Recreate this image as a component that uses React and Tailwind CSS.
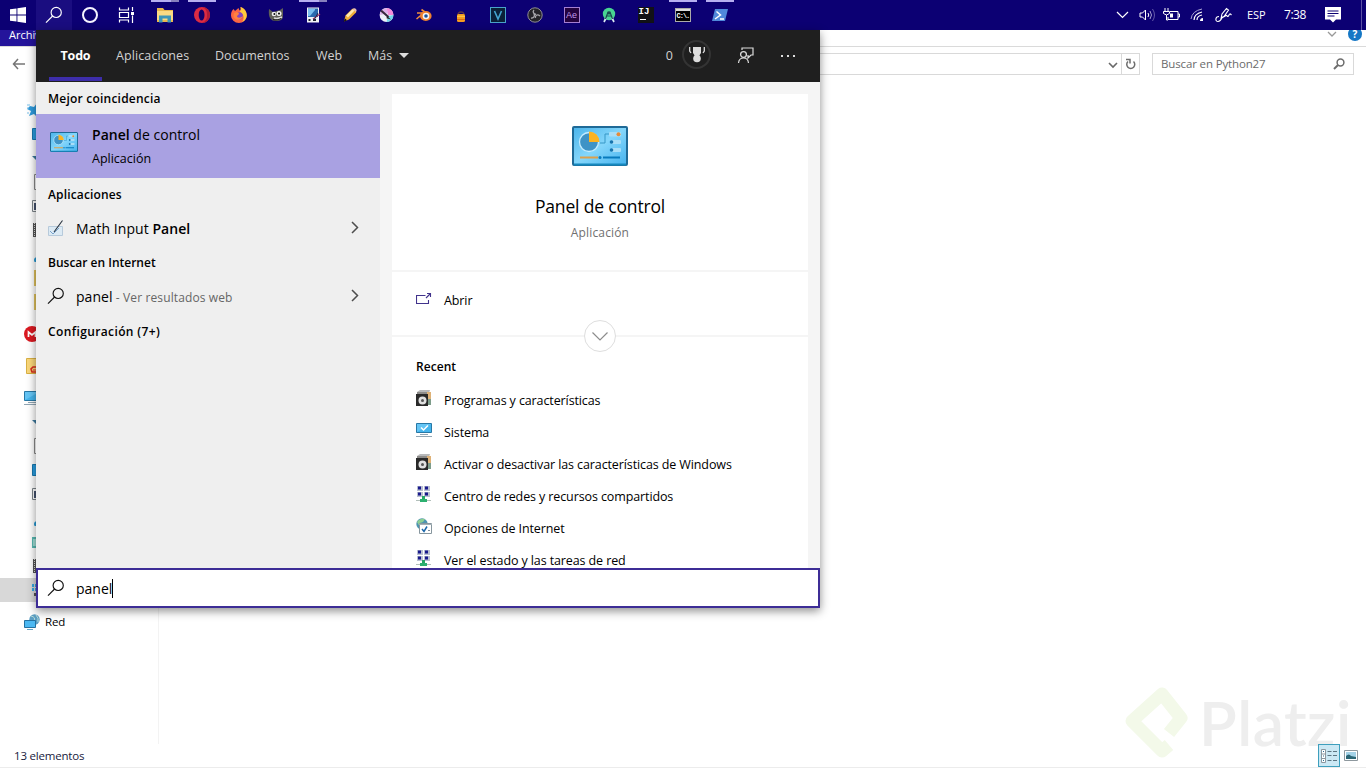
import React from "react";

const Svg = ({ w = 16, h = 16, box, className = "", children }) => (
  <svg width={w} height={h} viewBox={box || `0 0 ${w} ${h}`} fill="none" className={`shrink-0 ${className}`}>
    {children}
  </svg>
);

const Magnifier = ({ color = "#111", size = 18, className = "" }) => (
  <Svg w={size} h={size} box="0 0 18 18" className={className}>
    <circle cx="11.2" cy="6.4" r="5.1" stroke={color} strokeWidth="1.15" />
    <path d="M7.600 10 1 16.600" stroke={color} strokeWidth="1.15" />
  </Svg>
);

const ControlPanel = ({ w, h, id, className }) => (
  <Svg w={w} h={h} box="0 0 56 40" className={className}>
    <defs>
      <linearGradient id={id} x1="0" y1="0" x2="1" y2="1">
        <stop offset="0" stopColor="#4bb4ea" />
        <stop offset=".5" stopColor="#84d6fb" />
        <stop offset="1" stopColor="#45b2ee" />
      </linearGradient>
    </defs>
    <rect x="1" y="1" width="54" height="38" rx="1" fill={`url(#${id})`} stroke="#1f6a97" strokeWidth="2" />
    <path d="M2 38.500h52" stroke="#1688bd" strokeWidth="2" />
    <circle cx="17" cy="16" r="9.500" fill="#3f93c6" stroke="#c4ecff" strokeWidth="1.300" />
    <path d="M17 16V5.500A10.500 10.500 0 0 1 27.500 16Z" fill="#fbb322" />
    <path d="M28 17h5V8h4" stroke="#3797c6" />
    <rect x="37" y="6" width="12" height="4.500" rx="1" fill="#a9def7" />
    <circle cx="46.500" cy="8.300" r="2" fill="#e58b3a" />
    <rect x="40" y="14" width="9" height="4" rx="1" fill="#a9def7" />
    <circle cx="39.500" cy="16" r="1.800" fill="#1874ad" />
    <rect x="40" y="22" width="9" height="4" rx="1" fill="#a9def7" />
    <circle cx="39.500" cy="24" r="1.800" fill="#1874ad" />
    <path d="M8 31.500h18" stroke="#dda04c" strokeWidth="2" />
    <path d="M31 31.500h17" stroke="#087abd" strokeWidth="2" />
    <circle cx="28" cy="31.500" r="1.500" fill="#087abd" />
  </Svg>
);

/* ---------- taskbar ---------- */

const appIcons = {
  explorer: (
    <Svg>
      <path d="M0 1h6l1.500 2H16v12H0z" fill="#e9b84f" />
      <path d="M0 4h16v9H0z" fill="#fbdb84" />
      <path d="M2 15.500V8.500h12v7h-3.500v-4h-5v4z" fill="#3e97b8" />
    </Svg>
  ),
  opera: (
    <Svg>
      <circle cx="8" cy="8" r="8" fill="#dc2b43" />
      <path d="M8 0a8 8 0 0 1 0 16 8 8 0 0 0 5-8 8 8 0 0 0-5-8z" fill="#b01c37" />
      <ellipse cx="7.600" cy="8" rx="2.900" ry="5.500" fill="#12006b" />
    </Svg>
  ),
  firefox: (
    <Svg>
      <path d="M2.500 2l1.500 2L7.500 1l1 2.500c2-1 1-2.500 1-3.500 3 1 6.300 4 6.300 8.500a7.900 7.400 0 0 1-15.800 0c0-3 .5-4.500 2.500-6.500z" fill="#fb6543" />
      <path d="M9.500 0c4 1 6.600 5 6.200 9-.4 3-2 5-4.500 6 3-5 1-8-2.500-10.500 2-1 .8-3.500.8-4.500z" fill="#ffcc3c" />
      <circle cx="8.300" cy="8.800" r="3.600" fill="#8246c2" />
      <path d="M3 6c2-1 5-1 5 1L6 9c0 2 3 2.500 6 0-1 5-9 5-9.500 0z" fill="#ff8140" />
    </Svg>
  ),
  gimp: (
    <Svg>
      <path d="M1 2l4 3 7-2 3-2v8c0 4-3 5-7 5-5 0-8-3-7-12z" fill="#5f5f57" />
      <circle cx="6" cy="7" r="2.300" fill="#eee" />
      <circle cx="11" cy="6.500" r="2.500" fill="#f6f6f6" />
      <circle cx="6.400" cy="7" r="1" fill="#111" />
      <circle cx="11" cy="6.600" r="1.100" fill="#111" />
      <path d="M6 11c3 1 6 0 8-1" stroke="#ddd" strokeWidth="1.500" />
      <path d="M5 12.500c3 1 6 0 8-1" stroke="#222" />
    </Svg>
  ),
  rapid: (
    <Svg>
      <path d="M2 .5h12v15H2z" fill="#f2f3f8" />
      <path d="M3 1.500h10v8.500H3z" fill="#2b69ae" />
      <path d="M3 2h7v1L5 9H3z" fill="#7abff0" />
      <path d="M3.500 12h2v2h-2zM8 12h3v2H8z" fill="#20242c" />
      <path d="M8 12l7-5" stroke="#a43762" strokeWidth="1.300" />
      <path d="M9 13l4-7" stroke="#222b52" />
    </Svg>
  ),
  pencil: (
    <Svg>
      <path d="M2 14.500l1.500-6 6.500-6.500c2-1 5 1 4 3.500l-7 7z" fill="#efac37" />
      <path d="M4 8.500l6.500-6.300 2 1.300L6 10.500z" fill="#ffe9ae" />
      <path d="M10.500 2l1.500-.8c1.500-.3 3 1.300 2.500 2.700l-.8 1.200z" fill="#e5b9b1" />
      <path d="M1.500 15l1.500-3.500 2 1.700z" fill="#111" />
    </Svg>
  ),
  krita: (
    <Svg>
      <circle cx="7.500" cy="8" r="6.900" fill="#eef0f8" />
      <path d="M7.500 1a7 7 0 0 1 7 7H9z" fill="#f48cda" />
      <path d="M1 8a7 7 0 0 1 6.500-7L9 6z" fill="#ddb0e8" />
      <path d="M14.500 8a7 7 0 0 1-7 7L9 9z" fill="#75d6ea" />
      <path d="M2 3.500l7.500 6.500" stroke="#38283c" strokeWidth="2.200" />
      <path d="M8 9l4 3.500-4.500-1.300z" fill="#222" />
    </Svg>
  ),
  blender: (
    <Svg>
      <path d="M1 6h7M.5 12l6-5M5.500 2.500l6 4.500" stroke="#ef8e3b" strokeWidth="1.600" />
      <ellipse cx="9.800" cy="9" rx="5.800" ry="5" fill="#ef812e" />
      <circle cx="10" cy="9" r="3.300" fill="#f5f5f5" />
      <circle cx="10" cy="9" r="1.800" fill="#18539a" />
    </Svg>
  ),
  bag: (
    <Svg>
      <path d="M5 8c0-4 6-4 6 0" stroke="#593348" strokeWidth="1.300" />
      <rect x="4" y="7" width="8" height="8" rx="1.500" fill="#f59b20" />
      <path d="M4 9.300h8" stroke="#ffd04e" />
      <path d="M4 12.500h8" stroke="#d96c13" />
    </Svg>
  ),
  vegas: (
    <Svg>
      <rect x=".5" y=".5" width="15" height="15" fill="#0a2038" stroke="#4aa3ca" />
      <path d="M4.500 4l3.500 8 3.500-8" stroke="#43a3d1" strokeWidth="1.600" />
    </Svg>
  ),
  obs: (
    <Svg>
      <circle cx="8" cy="8" r="7.200" fill="#252429" stroke="#8f8d95" strokeWidth="1" />
      <path d="M7 3c-2 2 0 4 2 4.500M13 9c-3-2.500-5 0-4.500 2M4 11c3 .500 4-2 3-4" stroke="#a8a7ac" strokeWidth="1.300" />
    </Svg>
  ),
  ae: (
    <span className="flex h-4 w-4 items-center justify-center border border-[#a47fd2] bg-[#23023e] font-['Liberation_Sans'] text-[9px] leading-none text-[#c19aed]">Ae</span>
  ),
  studio: (
    <Svg>
      <circle cx="8" cy="7" r="6.200" fill="#48d592" />
      <path d="M3 15l2-4M13 15l-2-4" stroke="#dceaf2" strokeWidth="1.700" />
      <path d="M4.500 12L7 5h2l2.500 7M6 9h4" stroke="#17494d" strokeWidth="1.200" />
      <circle cx="8" cy="6" r="1.500" fill="#17494d" />
    </Svg>
  ),
  idea: (
    <span className="flex h-4 w-4 flex-col bg-[#111116] pl-px font-['Liberation_Mono'] text-[9px] font-bold leading-[11px] text-white">
      IJ
      <span className="ml-px mt-px h-px w-1.5 bg-white" />
    </span>
  ),
  cmd: (
    <span className="flex h-[14px] w-4 flex-col border border-[#aaa] bg-black">
      <span className="h-0.5 shrink-0 bg-[#ddd]" />
      <span className="pl-px font-['Liberation_Mono'] text-[7px] font-bold leading-[10px] tracking-[-1px] text-white">C:\.</span>
    </span>
  ),
  powershell: (
    <Svg>
      <path d="M3 2h13l-3 12H0z" fill="#5089da" />
      <path d="M4.500 4.500L8.500 8l-5.500 4M8 12h4" stroke="#fff" strokeWidth="1.500" />
    </Svg>
  ),
};

const apps = [
  ["explorer", "stack"], ["opera", "one"], ["firefox"], ["gimp"], ["rapid", "stack"], ["pencil"], ["krita"], ["blender"],
  ["bag"], ["vegas"], ["obs"], ["ae"], ["studio"], ["idea"], ["cmd", "one"], ["powershell", "one"],
];

function Taskbar() {
  return (
    <div className="flex h-[30px] shrink-0 bg-[#0c0073]">
      <div className="flex w-9 items-center justify-center">
        <Svg>
          <path d="M0 2.300l6.500-.9v6.200H0zM7.400 1.200L16 0v7.600H7.400zM0 8.400h6.500v6.200L0 13.700zM7.400 8.400H16V16l-8.600-1.200z" fill="#fff" />
        </Svg>
      </div>
      <div className="flex w-9 items-center justify-center bg-[#1a0d80]"><Magnifier color="#fff" /></div>
      <div className="flex w-9 items-center justify-center">
        <span className="h-4 w-4 rounded-full border-[2px] border-[#f5f3ff]" />
      </div>
      <div className="flex w-[38px] items-center pl-2.5">
        <Svg>
          <path d="M1.500 .5V3h9V.5M1.500 15.500V13h9v2.500M1.500 5.500h9v5h-9zM14.500 0v4M14.500 8.500V16" stroke="#fff" strokeWidth="1.200" />
          <path d="M13 5h3v3h-3z" fill="#fff" />
        </Svg>
      </div>
      {apps.map(([name, state]) => (
        <div key={name} className="flex w-[37px] flex-col items-center">
          <div className="flex h-0.5 w-7 shrink-0">
            {state && <span className="grow bg-[#b6aff0]" />}
            {state === "stack" && <span className="w-2 bg-[#8780bd]" />}
          </div>
          <div className="flex h-[26px] items-center">{appIcons[name]}</div>
        </div>
      ))}
      <div className="grow" />
      <div className="flex w-[246px] items-center font-['Open_Sans',sans-serif] text-[11px] text-white">
        <Svg w={13} h={8} className="ml-px"><path d="M1 1l5.500 5.500L12 1" stroke="#fff" strokeWidth="1.200" /></Svg>
        <Svg w={17} h={14} className="ml-2.5">
          <path d="M1 5h2.500L6.500 2v10l-3-3H1z" stroke="#fff" />
          <path d="M9 5q1.500 2 0 4" stroke="#fff" />
          <path d="M11 3q3 4 0 8" stroke="#a39bcf" />
          <path d="M13.500 1q4 6 0 12" stroke="#6257a8" />
        </Svg>
        <Svg w={17} h={14} className="ml-[7px]">
          <path d="M7 3.500h8v8H5V9M15 6h1.500v3H15M2 0v3M5 0v3M.5 3.500h6v2q-3 3-6 0zM3.500 7v5H5" stroke="#fff" />
          <path d="M7 5.500h3v4H7z" fill="#fff" />
        </Svg>
        <Svg w={14} h={14} className="ml-2.5">
          <path d="M1 11Q2 3 12 1" stroke="#aaa4d4" />
          <path d="M4 12Q4 6 12 4M7 12q0-4 5-5" stroke="#fff" strokeWidth="1.200" />
          <path d="M10 13q0-3 3-3v3z" fill="#fff" />
        </Svg>
        <Svg w={17} h={16} className="ml-[11px]">
          <path d="M4 9.500c-4 0-4 5-1 5s3.500-3 4.500-5M6 11.500l1-4.500 4.500-5.500 2 1.500-4.500 6.500zM9.500 10c2-4 3 1 4-1s1-3 3-1" stroke="#fff" strokeWidth="1.100" />
        </Svg>
        <span className="ml-[15px] w-[37px] tracking-[-0.1px]">ESP</span>
        <span className="w-[41px] text-[12px] tracking-[-0.45px]">7:38</span>
        <Svg w={16} h={16}>
          <path d="M0 0h16v12.500h-5L8 15.500 5 12.500H0z" fill="#fff" />
          <path d="M2.500 4h11M2.500 6.500h11M2.500 9h7" stroke="#0c0073" />
        </Svg>
      </div>
      <div className="w-[5px] border-l border-[#5b51a3]" />
    </div>
  );
}

/* ---------- explorer window ---------- */

const Monitor = ({ check }) => (
  <Svg>
    <path d="M.5 1.500h15v9H.5z" fill="#45b5ed" stroke="#2878a6" />
    <path d="M1 2h14L1 10z" fill="#79d1fa" opacity=".6" />
    <path d="M4 12.500h8M0 14.500h16" stroke="#91a6b4" />
    {check && <path d="M5 5.500l2.500 2.500L12 3.500" stroke="#fff" strokeWidth="1.500" />}
  </Svg>
);

const side = {
  pin: <Svg><path d="M4 4l4 1 3-4 1 5 4 1-4 3v6l-4-4-5 2 2-5-4-2z" fill="#2f9bdd" transform="translate(-1)" /><path d="M0 3h3M0 6h2M0 11h2" stroke="#79c1ea" /></Svg>,
  desk: <Svg><path d="M.5 2.500h15v11H.5z" fill="#2a9de0" stroke="#1878ae" /></Svg>,
  down: <Svg><path d="M0 6h12L6 12z" fill="#3d7a9f" /></Svg>,
  doc: <Svg><path d="M2.500.5h12v15h-12z" fill="#fff" stroke="#8a8a8a" /></Svg>,
  pic: <Svg><path d="M.5 2.500h15v11H.5z" fill="#fff" stroke="#7c8489" /><path d="M2 5h12v7H2z" fill="#46536e" /></Svg>,
  film: <Svg><path d="M1 1h14v14H1z" fill="#555" /><path d="M2.500 1v14" stroke="#ddd" strokeDasharray="1 1" /></Svg>,
  music: <Svg><ellipse cx="6" cy="14" rx="4" ry="3" fill="#279bd6" /></Svg>,
  folder: <Svg><path d="M2 0h14v16H2z" fill="#e1c35d" /></Svg>,
  cube: <Svg><path d="M0 3h12v11H0z" fill="#58b9b2" /><path d="M1 5h3v7H1z" fill="#a0ddd5" /></Svg>,
  disk: <Svg><path d="M0 2h2v3H0zM3 2h3v3H3zM0 6h2v3H0zM3 6h3v3H3z" fill="#35a7e2" /><path d="M2 11h9v3H2z" fill="#555" /></Svg>,
};

const navGroups = [
  ["pin", "desk", "down", "doc", "pic", "film", "music", "folder", "folder"],
  ["mega"],
  ["share"],
  ["pc", "down", "doc", "desk", "pic", "music", "cube", "film", "disk"],
];

const rootIcons = {
  mega: <Svg><circle cx="8" cy="8" r="8" fill="#db1921" /><path d="M4.500 11V6L8 9l3.500-3v5" stroke="#fff" strokeWidth="1.700" /></Svg>,
  share: <Svg><path d="M2.500.5h14v15h-14z" fill="#fbd87a" stroke="#d9b144" /><path d="M12 9H9l-2 2 1 3h4" stroke="#d92b1d" strokeWidth="1.600" /><path d="M9 12h3" stroke="#d92b1d" /></Svg>,
  pc: <Monitor />,
};

function NavPane() {
  return (
    <div className="flex w-[159px] shrink-0 flex-col gap-2 border-r border-[#f3f3f3] pt-[17px]">
      {navGroups.map((g, i) => (
        <div key={i} className="flex flex-col">
          {g.map((n, j) => (
            <div key={j} className={`flex h-6 items-center ${n === "disk" ? "bg-[#d8d8d8]" : ""}`}>
              <span className={rootIcons[n] ? "ml-6" : n === "pin" ? "ml-[27px]" : "ml-8"}>{rootIcons[n] || side[n]}</span>
            </div>
          ))}
        </div>
      ))}
      <div className="flex h-6 items-center pl-6 text-[11.5px] tracking-[-0.2px] text-black">
        <Svg>
          <circle cx="10.500" cy="5.500" r="5.200" fill="#5c9fc4" />
          <path d="M7 2q5 1 3 5M12 1q3 3 2 7" stroke="#b7dcda" />
          <path d="M.5 6.500h11v7H.5z" fill="#4bb8f2" stroke="#2471a0" />
          <path d="M3 15.500h6" stroke="#65a5c6" />
        </Svg>
        <span className="ml-[5px]">Red</span>
      </div>
    </div>
  );
}

function Explorer() {
  return (
    <div className="flex grow flex-col bg-white">
      <div className="flex h-[17px] shrink-0 overflow-hidden border-b border-[#dadada]">
        <div className="w-14 bg-[#24149b] pl-[9px] text-[11px] leading-[10px] text-white">Archivo</div>
        <div className="grow" />
        <Svg w={10} h={6} className="mr-[11px] mt-[1px]"><path d="M1 1l4 4 4-4" stroke="#999" strokeWidth="1.300" /></Svg>
        <div className="-mt-[3px] mr-1 flex h-3.5 w-3.5 items-center justify-center rounded-full bg-[#1577c5] text-[10px] font-bold leading-[14px] text-white">?</div>
      </div>
      <div className="flex h-[34px] shrink-0 pl-3 pr-3 pt-1.5">
        <Svg w={14} h={12} className="mt-[5px]"><path d="M13 6H1.500M6 1L1.500 6 6 11" stroke="#757575" strokeWidth="1.500" /></Svg>
        <div className="ml-[20px] flex h-[22px] w-[1094px] border border-[#d9d9d9]">
          <div className="grow" />
          <Svg w={10} h={7} className="mr-[3px] mt-2"><path d="M1 1l4 4 4-4" stroke="#696969" strokeWidth="1.600" /></Svg>
          <div className="flex w-[18px] items-center justify-center border-l border-[#d9d9d9]">
            <Svg w={11} h={12}><path d="M8.500 3.500a4 4 0 1 1-5.500 0M1 1.500h4v4" stroke="#6d6d6d" strokeWidth="1.500" /></Svg>
          </div>
        </div>
        <div className="ml-3 flex h-[22px] grow items-center justify-between border border-[#d9d9d9] pl-2 pr-2 text-[11.500px] tracking-[-0.14px] text-[#6b6b6b]">
          <span>Buscar en Python27</span>
          <Svg w={12} h={12}><circle cx="7.500" cy="4.500" r="3.400" stroke="#6d6d6d" strokeWidth="1.500" /><path d="M5 7L1 11" stroke="#6d6d6d" strokeWidth="2" /></Svg>
        </div>
      </div>
      <div className="flex grow"><NavPane /></div>
      <div className="flex h-6 shrink-0 items-center border-b border-[#ececec] pl-[14px] text-[11.500px] tracking-[-0.2px] text-[#18213d]">
        <span className="grow">13 elementos</span>
        <span className="z-10 mr-1 flex h-[23px] w-[22px] items-center justify-center border border-[#3e9fbd] bg-[#cbe8f4]">
          <Svg w={16} h={14}>
            <path d="M.5.500h4v13h-4zM.5 5h4M.5 9.500h4" fill="#fff" stroke="#8b979f" />
            <path d="M6.500 2.500h4M12 2.500h4M6.500 6.500h4M12 6.500h4M6.500 11.500h4M12 11.500h4" stroke="#5c7582" />
            <path d="M2 2h1v1H2zM2 6.500h1v1H2zM2 11h1v1H2z" fill="#2b6e92" />
          </Svg>
        </span>
        <Svg w={14} h={12} className="z-10 mr-2">
          <path d="M.5.500h13v10H.5z" fill="#fff" stroke="#8e989e" />
          <path d="M2 2h10v7H2z" fill="#a4d2e7" />
          <path d="M2 6q3-3 5 0l5 1v2H2z" fill="#2c6675" />
        </Svg>
      </div>
    </div>
  );
}

function Watermark() {
  return (
    <div className="absolute left-[1125px] top-[684px] flex">
      <Svg w={66} h={78}>
        <path d="M44 49L56 34 37 10 7 37 37 67 44 61" stroke="#f3f9e9" strokeWidth="13" strokeLinejoin="round" />
      </Svg>
      <span className="ml-[8px] mt-[1px] font-['Lato',sans-serif] text-[62px] font-semibold leading-[74px] tracking-[0.5px] text-[#eeeeee]">Platzi</span>
    </div>
  );
}

/* ---------- search menu ---------- */

const Disc = () => (
  <Svg>
    <path d="M1 2l3-2h10l-1 3z" fill="#b8b9ba" /><path d="M10 2h5v8h-5z" fill="#dfb277" /><path d="M12 9h3v6h-3z" fill="#7d9c8a" /><path d="M1 2h10v2H1z" fill="#8d8c8a" />
    <path d="M0 4h12v12H0z" fill="#292929" /><circle cx="6.500" cy="10.500" r="4" fill="#e0e0e0" /><circle cx="6.500" cy="10.500" r="1.500" fill="#555" />
  </Svg>
);
const Net = () => (
  <Svg>
    <path d="M1 0h6v5H1zM8 0h6v5H8zM1 6h6v5H1zM8 6h6v5H8z" fill="#b9bfd0" />
    <path d="M2 .5h3v3H2zM9 .5h3v3H9zM2 6.500h3v3H2zM9 6.500h3v3H9z" fill="#19198c" />
    <path d="M7.500 10v5" stroke="#25a665" strokeWidth="3" /><path d="M4 14.500h7" stroke="#2db070" strokeWidth="3" /><path d="M0 14.500h4M11 14.500h4" stroke="#b3c0bb" />
  </Svg>
);
const Globe = () => (
  <Svg>
    <circle cx="6" cy="6" r="5.700" fill="#4d94b1" /><path d="M1 4q3-4 8-3L7 4 4 5v4z" fill="#8dcf93" />
    <path d="M3.500 5.500h12v10h-12z" fill="#fff" stroke="#87969e" /><path d="M3 6.500h13" stroke="#a3b0b7" /><path d="M6 11l2 2.500 3-5" stroke="#1c67aa" strokeWidth="1.500" /><path d="M12 12.500h2" stroke="#789" />
  </Svg>
);

const recent = [
  [<Disc />, "Programas y características"],
  [<Monitor check />, "Sistema"],
  [<Disc />, "Activar o desactivar las características de Windows"],
  [<Net />, "Centro de redes y recursos compartidos"],
  [<Globe />, "Opciones de Internet"],
  [<Net />, "Ver el estado y las tareas de red"],
];

const Chevron = () => <Svg w={8} h={13} className="mb-[3px] mr-[21px]"><path d="M1 1l5.500 5.500L1 12" stroke="#4d4d4d" strokeWidth="1.500" /></Svg>;

function SearchMenu() {
  return (
    <div className="absolute left-9 top-[30px] flex h-[578px] w-[784px] flex-col shadow-[0_3px_9px_rgba(0,0,0,0.45)]">
      <div className="flex h-[52px] shrink-0 bg-[#1f1f1f] text-[12.500px] leading-[52px] text-[#d2d2d2]">
        <div className="ml-[13px] flex w-[53px] flex-col items-center font-bold text-white">
          <span className="h-[47px] tracking-[-0.2px]">Todo</span>
          <span className="h-1 w-full bg-[#3d2daa]" />
        </div>
        <span className="ml-[14px] w-[99px] tracking-[0.1px]">Aplicaciones</span>
        <span className="w-[101px]">Documentos</span>
        <span className="w-[52px]">Web</span>
        <span className="w-[31px]">Más</span>
        <Svg w={10} h={5} className="mt-[23px]"><path d="M0 0h10L5 5z" fill="#ddd" /></Svg>
        <span className="ml-auto">0</span>
        <span className="ml-[9px] mt-[10px] flex h-[29px] w-[29px] items-center justify-center rounded-full border-2 border-[#343434]">
          <Svg w={16} h={18}>
            <path d="M4 1h8v6l-2 3H6L4 7z" fill="#ddd" /><circle cx="8" cy="12.500" r="3.800" fill="#ddd" />
            <path d="M.7 1v4l1.300 2M15.300 1v4L14 7" stroke="#ddd" strokeWidth="1.300" />
          </Svg>
        </span>
        <Svg w={18} h={17} className="ml-[26px] mt-[17px]">
          <circle cx="6.500" cy="7.500" r="2.900" stroke="#ddd" strokeWidth="1.300" />
          <path d="M1.500 16q.5-5 5-5t5 5M5 3V1h11v7h-2l-3 3V8" stroke="#ddd" strokeWidth="1.200" />
        </Svg>
        <Svg w={16} h={4} className="ml-[25px] mr-6 mt-[24px]"><path d="M1 1h2v2H1zM7 1h2v2H7zM13 1h2v2h-2z" fill="#ddd" /></Svg>
      </div>

      <div className="flex h-[486px] shrink-0 overflow-hidden text-black">
        <div className="flex w-[344px] shrink-0 flex-col bg-[#efefef] text-[12px] font-semibold tracking-[0.1px]">
          <div className="h-8 pl-3 leading-[34px] tracking-[0.22px]">Mejor coincidencia</div>
          <div className="flex h-16 items-center bg-[#a9a1e2] pl-[14px] font-normal">
            <ControlPanel w={28} h={20} id="cp-small" className="mb-2" />
            <div className="ml-[14px] mt-1.5 flex flex-col">
              <span className="h-6 text-[14px] leading-[18px] tracking-[0.02px]"><span className="font-semibold">Panel</span> de control</span>
              <span className="h-[22px] text-[12.500px] leading-[18px] tracking-[0px]">Aplicación</span>
            </div>
          </div>
          <div className="h-[34px] pl-3 leading-[33px] tracking-[0.15px]">Aplicaciones</div>
          <div className="flex h-[34px] items-center pl-3 font-normal">
            <Svg className="mb-[3px]">
              <path d="M.5 6.500h14v9H.5z" fill="#dceaf4" stroke="#b7cadb" /><path d="M2 11l3 3 6-6" stroke="#7aa4cc" /><path d="M6 12L14.500.5" stroke="#25303d" strokeWidth="1.100" />
            </Svg>
            <span className="mb-0.5 ml-3 grow text-[14px] tracking-[0.05px]">Math Input <span className="font-semibold">Panel</span></span>
            <Chevron />
          </div>
          <div className="h-[34px] pl-3 leading-[33px] tracking-[0px]">Buscar en Internet</div>
          <div className="flex h-[34px] items-center pl-3 font-normal">
            <Magnifier className="-ml-px mb-[3px]" />
            <span className="mb-0.5 ml-[11px] grow text-[12px] tracking-[0.12px] text-[#666]"><span className="text-[14px] tracking-[0.05px] text-black">panel</span> - Ver resultados web</span>
            <Chevron />
          </div>
          <div className="h-[34px] pl-3 leading-[35px] tracking-[0.38px]">Configuración (7+)</div>
        </div>

        <div className="flex grow flex-col bg-[#f5f5f5] px-3 pt-3">
          <div className="flex h-[176px] shrink-0 flex-col items-center bg-white pt-8">
            <ControlPanel w={56} h={40} id="cp-large" />
            <span className="mt-7 text-[17.500px] leading-6 tracking-[-0.17px]">Panel de control</span>
            <span className="mt-1.5 text-[12px] leading-[18px] tracking-[0.15px] text-[#707070]">Aplicación</span>
          </div>
          <div className="mt-0.5 flex h-[63px] shrink-0 items-center bg-white pl-6 text-[12.500px]">
            <Svg w={16} h={13} className="mb-[9px]"><path d="M9.500 2.500H.5v8h12V7M10 5L14 1M11 .5h3.500V4" stroke="#41338c" strokeWidth="1.100" /></Svg>
            <span className="ml-3 mb-1 tracking-[-0.1px]">Abrir</span>
          </div>
          <div className="mt-0.5 flex grow flex-col bg-white pl-6 text-[12.500px]">
            <div className="relative -mt-[17px] ml-[168px] flex h-8 w-8 shrink-0 items-center justify-center rounded-full border border-[#dedede] bg-white">
              <Svg w={16} h={9}><path d="M.5.500L8 8 15.500.5" stroke="#8c8c8c" strokeWidth="1.200" /></Svg>
            </div>
            <div className="h-[32px] shrink-0 text-[12px] font-semibold leading-[29px] tracking-[0.05px]">Recent</div>
            {recent.map(([icon, label]) => (
              <div key={label} className="flex h-8 shrink-0 items-center">
                <span className="mb-1">{icon}</span>
                <span className="ml-3 mt-0.5 tracking-[-0.11px]">{label}</span>
              </div>
            ))}
          </div>
        </div>
      </div>

      <div className="flex h-10 shrink-0 items-center border-2 border-[#3d2d96] bg-white pl-[9px] text-black">
        <Magnifier />
        <span className="ml-[11px] mt-0.5 text-[14px] leading-5">panel</span>
        <span className="h-[19px] w-px bg-black" />
      </div>
    </div>
  );
}

export default function App() {
  return (
    <div className="relative flex h-[768px] w-[1366px] flex-col overflow-hidden font-['Open_Sans',sans-serif]">
      <Taskbar />
      <Explorer />
      <Watermark />
      <SearchMenu />
    </div>
  );
}
